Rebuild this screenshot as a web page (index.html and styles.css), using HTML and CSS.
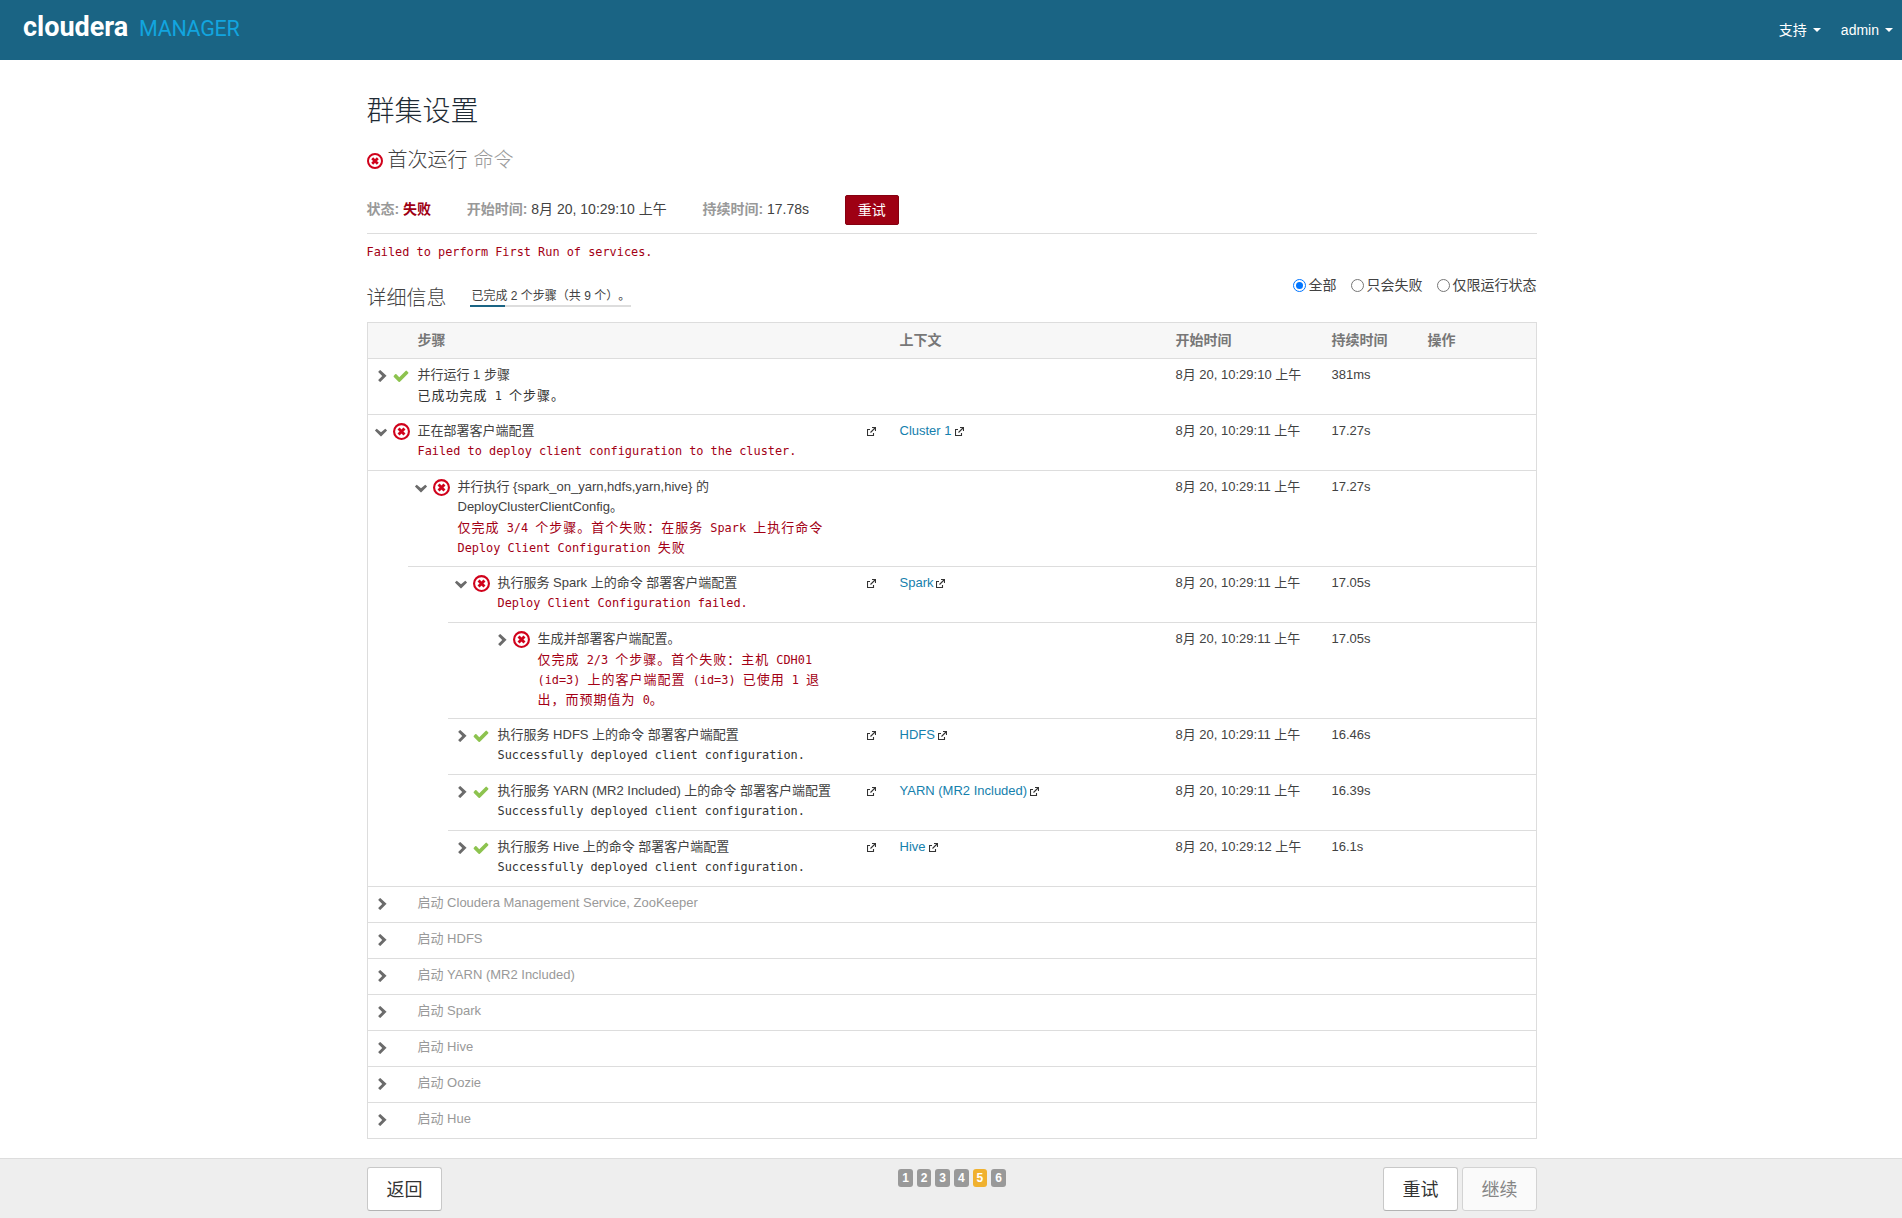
FILE: index.html
```html
<!DOCTYPE html>
<html lang="zh-CN">
<head>
  <meta charset="UTF-8">
  <title>群集设置 - Cloudera Manager</title>
  <link rel="stylesheet" href="styles.css">
</head>
<body>
  <!-- Icons -->
  <svg class="sprite">
    <symbol id="right" viewBox="346 154 1036 1484"><path d="M1363 877l-742 742q-19 19-45 19t-45-19l-166-166q-19-19-19-45t19-45l467-467-467-467q-19-19-19-45t19-45l166-166q19-19 45-19t45 19l742 678q19 19 19 45t-19 45z"/></symbol>
    <symbol id="down" viewBox="90 498 1612 1070"><path d="M1683 808l-742 741q-19 19-45 19t-45-19l-742-741q-19-19-19-45.5t19-45.5l166-165q19-19 45-19t45 19l531 431 531-431q19-19 45-19t45 19l166 165q19 19 19 45.5t-19 45.5z"/></symbol>
    <symbol id="check" viewBox="121 270 1550 1252"><path d="M1671 566q0 40-28 68l-724 724-136 136q-28 28-68 28t-68-28l-136-136-362-362q-28-28-28-68t28-68l136-136q28-28 68-28t68 28l294 295 656-657q28-28 68-28t68 28l136 136q28 28 28 68z"/></symbol>
    <symbol id="error" viewBox="0 0 16 16"><circle cx="8" cy="8" r="7" fill="none" stroke="currentColor" stroke-width="2"/><path d="M5.2 5.2l5.6 5.6M10.8 5.2l-5.6 5.6" stroke="currentColor" stroke-width="2.7"/></symbol>
    <symbol id="external" viewBox="0 0 9 9"><path d="M3 2.5H.5v6h6V6M5 .5h3.5V4M8.5.5l-5 5" fill="none" stroke="currentColor" stroke-width="1.1"/></symbol>
  </svg>

  <div class="navbar">
    <div class="logo"><b>cloudera</b><span>MANAGER</span></div>
    <div class="nav">
      <a>支持<i class="caret"></i></a>
      <a>admin<i class="caret"></i></a>
    </div>
  </div>

  <div class="container">
    <h1>群集设置</h1>
    <h2><svg class="icon-error"><use href="#error"/></svg>首次运行 <span class="muted">命令</span></h2>

    <div class="summary">
      <div><b>状态:</b> <b class="failed">失败</b></div>
      <div><b>开始时间:</b> 8月 20, 10:29:10 上午</div>
      <div><b>持续时间:</b> 17.78s</div>
      <button class="btn-danger">重试</button>
    </div>
    <p class="result msg error">Failed to perform First Run of services.</p>

    <div class="details">
      <h3>详细信息</h3>
      <div class="progress">
        <span>已完成 2 个步骤（共 9 个）。</span>
        <div class="track"><div class="bar" style="width: 22%"></div></div>
      </div>
      <div class="filters">
        <label><i class="radio checked"></i>全部</label>
        <label><i class="radio"></i>只会失败</label>
        <label><i class="radio"></i>仅限运行状态</label>
      </div>
    </div>

    <div class="table">
      <div class="row head">
        <div class="step">步骤</div>
        <div class="context">上下文</div>
        <div class="start">开始时间</div>
        <div class="duration">持续时间</div>
        <div class="ops">操作</div>
      </div>

      <div class="node">
        <div class="row">
          <div class="toggle"><svg class="right"><use href="#right"/></svg></div>
          <div class="status"><svg class="ok"><use href="#check"/></svg></div>
          <div class="step">并行运行 1 步骤<div class="msg cn">已成功完成 <span>1</span> 个步骤。</div></div>
          <div class="context"></div>
          <div class="start">8月 20, 10:29:10 上午</div>
          <div class="duration">381ms</div>
          <div class="ops"></div>
        </div>
      </div>

      <div class="node">
        <div class="row">
          <div class="toggle"><svg class="down"><use href="#down"/></svg></div>
          <div class="status"><svg class="fail"><use href="#error"/></svg></div>
          <div class="step">正在部署客户端配置<div class="msg error">Failed to deploy client configuration to the cluster.</div></div>
          <div class="link"><svg class="external"><use href="#external"/></svg></div>
          <div class="context"><a>Cluster 1</a><svg class="external"><use href="#external"/></svg></div>
          <div class="start">8月 20, 10:29:11 上午</div>
          <div class="duration">17.27s</div>
          <div class="ops"></div>
        </div>
        <div class="children">
          <div class="node">
            <div class="row">
              <div class="toggle"><svg class="down"><use href="#down"/></svg></div>
              <div class="status"><svg class="fail"><use href="#error"/></svg></div>
              <div class="step">并行执行 {spark_on_yarn,hdfs,yarn,hive} 的<br>DeployClusterClientConfig。<div class="msg cn error">仅完成 <span>3/4</span> 个步骤。首个失败：在服务 <span>Spark</span> 上执行命令<br><span>Deploy Client Configuration</span> 失败</div></div>
              <div class="context"></div>
              <div class="start">8月 20, 10:29:11 上午</div>
              <div class="duration">17.27s</div>
              <div class="ops"></div>
            </div>
            <div class="children">
              <div class="node">
                <div class="row">
                  <div class="toggle"><svg class="down"><use href="#down"/></svg></div>
                  <div class="status"><svg class="fail"><use href="#error"/></svg></div>
                  <div class="step">执行服务 Spark 上的命令 部署客户端配置<div class="msg error">Deploy Client Configuration failed.</div></div>
                  <div class="link"><svg class="external"><use href="#external"/></svg></div>
                  <div class="context"><a>Spark</a><svg class="external"><use href="#external"/></svg></div>
                  <div class="start">8月 20, 10:29:11 上午</div>
                  <div class="duration">17.05s</div>
                  <div class="ops"></div>
                </div>
                <div class="children">
                  <div class="node">
                    <div class="row">
                      <div class="toggle"><svg class="right"><use href="#right"/></svg></div>
                      <div class="status"><svg class="fail"><use href="#error"/></svg></div>
                      <div class="step">生成并部署客户端配置。<div class="msg cn error">仅完成 <span>2/3</span> 个步骤。首个失败：主机 <span>CDH01</span><br><span>(id=3)</span> 上的客户端配置 <span>(id=3)</span> 已使用 <span>1</span> 退<br>出，而预期值为 <span>0</span>。</div></div>
                      <div class="context"></div>
                      <div class="start">8月 20, 10:29:11 上午</div>
                      <div class="duration">17.05s</div>
                      <div class="ops"></div>
                    </div>
                  </div>
                </div>
              </div>
              <div class="node">
                <div class="row">
                  <div class="toggle"><svg class="right"><use href="#right"/></svg></div>
                  <div class="status"><svg class="ok"><use href="#check"/></svg></div>
                  <div class="step">执行服务 HDFS 上的命令 部署客户端配置<div class="msg">Successfully deployed client configuration.</div></div>
                  <div class="link"><svg class="external"><use href="#external"/></svg></div>
                  <div class="context"><a>HDFS</a><svg class="external"><use href="#external"/></svg></div>
                  <div class="start">8月 20, 10:29:11 上午</div>
                  <div class="duration">16.46s</div>
                  <div class="ops"></div>
                </div>
              </div>
              <div class="node">
                <div class="row">
                  <div class="toggle"><svg class="right"><use href="#right"/></svg></div>
                  <div class="status"><svg class="ok"><use href="#check"/></svg></div>
                  <div class="step">执行服务 YARN (MR2 Included) 上的命令 部署客户端配置<div class="msg">Successfully deployed client configuration.</div></div>
                  <div class="link"><svg class="external"><use href="#external"/></svg></div>
                  <div class="context"><a>YARN (MR2 Included)</a><svg class="external"><use href="#external"/></svg></div>
                  <div class="start">8月 20, 10:29:11 上午</div>
                  <div class="duration">16.39s</div>
                  <div class="ops"></div>
                </div>
              </div>
              <div class="node">
                <div class="row">
                  <div class="toggle"><svg class="right"><use href="#right"/></svg></div>
                  <div class="status"><svg class="ok"><use href="#check"/></svg></div>
                  <div class="step">执行服务 Hive 上的命令 部署客户端配置<div class="msg">Successfully deployed client configuration.</div></div>
                  <div class="link"><svg class="external"><use href="#external"/></svg></div>
                  <div class="context"><a>Hive</a><svg class="external"><use href="#external"/></svg></div>
                  <div class="start">8月 20, 10:29:12 上午</div>
                  <div class="duration">16.1s</div>
                  <div class="ops"></div>
                </div>
              </div>
            </div>
          </div>
        </div>
      </div>

      <!-- Steps not started yet -->
      <div class="node"><div class="row pending"><div class="toggle"><svg class="right"><use href="#right"/></svg></div><div class="status"></div><div class="step">启动 Cloudera Management Service, ZooKeeper</div></div></div>
      <div class="node"><div class="row pending"><div class="toggle"><svg class="right"><use href="#right"/></svg></div><div class="status"></div><div class="step">启动 HDFS</div></div></div>
      <div class="node"><div class="row pending"><div class="toggle"><svg class="right"><use href="#right"/></svg></div><div class="status"></div><div class="step">启动 YARN (MR2 Included)</div></div></div>
      <div class="node"><div class="row pending"><div class="toggle"><svg class="right"><use href="#right"/></svg></div><div class="status"></div><div class="step">启动 Spark</div></div></div>
      <div class="node"><div class="row pending"><div class="toggle"><svg class="right"><use href="#right"/></svg></div><div class="status"></div><div class="step">启动 Hive</div></div></div>
      <div class="node"><div class="row pending"><div class="toggle"><svg class="right"><use href="#right"/></svg></div><div class="status"></div><div class="step">启动 Oozie</div></div></div>
      <div class="node"><div class="row pending"><div class="toggle"><svg class="right"><use href="#right"/></svg></div><div class="status"></div><div class="step">启动 Hue</div></div></div>
    </div>
  </div>

  <div class="footer">
    <div class="footer-inner">
      <div class="side"><button class="btn">返回</button></div>
      <div class="pages">
        <span>1</span><span>2</span><span>3</span><span>4</span><span class="active">5</span><span>6</span>
      </div>
      <div class="side end">
        <button class="btn">重试</button>
        <button class="btn disabled">继续</button>
      </div>
    </div>
  </div>
</body>
</html>
```

FILE: styles.css
```css
* {
  box-sizing: border-box;
}

body {
  margin: 0;
  height: 100vh;
  display: flex;
  flex-direction: column;
  overflow: hidden;
  font-family: "Liberation Sans", Arial, "Noto Sans CJK SC", sans-serif;
  font-size: 14px;
  line-height: 20px;
  color: #424242;
  background: #fff;
}

.sprite {
  display: none;
}

svg {
  display: block;
  flex: none;
  fill: currentColor;
}

h1, h2, h3, p {
  margin: 0;
  font-weight: normal;
}

h1, h2, h3 {
  font-weight: 300;
}

button {
  font-family: inherit;
  padding: 0 0 2px;
}

/* Top bar */
.navbar {
  height: 60px;
  flex: none;
  display: flex;
  justify-content: space-between;
  padding: 0 9px 0 23px;
  background: #1a6484;
  color: #fff;
}

.logo {
  display: flex;
  align-items: baseline;
  font-family: Roboto, sans-serif;
  line-height: 55px;
}

.logo b {
  width: 116px;
  font-size: 27px;
}

.logo span {
  font-size: 21.5px;
  letter-spacing: -0.3px;
  color: #12a5df;
}

.nav {
  display: flex;
  gap: 20px;
  line-height: 60px;
}

.nav a {
  display: flex;
  align-items: center;
  gap: 6px;
}

.caret {
  border: 4px solid transparent;
  border-top-color: #fff;
  border-bottom: 0;
}

.container {
  width: 1170px;
  margin-left: 366.5px;
}

h1 {
  margin-top: 32px;
  font-size: 28px;
  line-height: 40px;
  color: #1f2b35;
}

h2 {
  display: flex;
  align-items: center;
  margin-top: 13px;
  font-size: 20px;
  line-height: 30px;
}

h2 .muted {
  margin-left: 6px;
  color: #999;
}

.icon-error {
  width: 16px;
  height: 16px;
  margin: 1px 5px 0 0;
  color: #d0021b;
}

.summary {
  display: flex;
  align-items: center;
  gap: 35.7px;
  height: 59px;
  padding-bottom: 9px;
  padding-top: 20px;
  border-bottom: 1px solid #ddd;
}

.summary div {
  margin-bottom: 2px;
}

.summary b {
  color: #999;
}

.summary b.failed {
  color: #9e0013;
}

.btn-danger {
  width: 54px;
  height: 30px;
  font-size: 14px;
  color: #fff;
  background: #9e0013;
  border: 1px solid #860010;
  border-radius: 2px;
}

.msg {
  font-family: "DejaVu Sans Mono", "Noto Sans CJK SC", monospace;
  font-size: 11.88px;
  color: #333;
}

.error {
  color: #a30015;
}

.msg.cn {
  font-size: 13px;
  font-family: "Noto Sans CJK SC", sans-serif;
  letter-spacing: 1px;
  word-spacing: 3.2px;
}

.msg.cn span {
  font-family: "DejaVu Sans Mono", monospace;
  font-size: 11.88px;
  line-height: 1;
  letter-spacing: 0;
  word-spacing: 0;
}

.result {
  margin-top: 8px;
}

.details {
  display: flex;
  margin-top: 13px;
  height: 47px;
}

h3 {
  width: 103px;
  padding-top: 8px;
  font-size: 20px;
  line-height: 30px;
}

.progress {
  width: 161px;
  padding-top: 11px;
  font-size: 12px;
  text-spacing-trim: space-all;
}

.progress span {
  display: block;
  height: 19px;
  padding-left: 2px;
}

.track {
  height: 2px;
  background: #ddd;
}

.bar {
  height: 2px;
  background: #1a6484;
}

.filters {
  display: flex;
  gap: 14px;
  margin-left: auto;
}

.filters label {
  display: flex;
  align-items: center;
  gap: 3px;
  height: 20px;
}

.radio {
  width: 13px;
  height: 13px;
  border: 1px solid #767676;
  border-radius: 50%;
}

.radio.checked {
  border-color: #0075ff;
  background: #0075ff;
  background-clip: content-box;
  padding: 2px;
}

/* Steps table */
.table {
  border: 1px solid #ddd;
  font-size: 13px;
}

.row {
  display: flex;
  padding: 6px 0 9px;
}

.row.head {
  padding: 7px 0 8px 50px;
  font-size: 14px;
  font-weight: bold;
  color: #777;
  background: #f7f7f7;
  border-bottom: 1px solid #ddd;
}

.node + .node {
  border-top: 1px solid #ddd;
}

.children {
  padding-left: 40px;
  border-top: 1px solid #ddd;
}

.toggle {
  width: 25px;
  padding: 5px 0 0 9px;
  color: #6b6b6b;
}

.status {
  width: 25px;
  padding-top: 2px;
}

.right {
  width: 9px;
  height: 12px;
}

.toggle .right {
  margin-left: 1px;
}

.down {
  width: 12px;
  height: 9px;
  margin: 2px 0 0 -2px;
}

.ok {
  width: 16px;
  height: 12px;
  margin-top: 3px;
  color: #8dc34f;
}

.fail {
  width: 17px;
  height: 17px;
  color: #d0021b;
}

.step {
  flex: 1;
  white-space: nowrap;
}

.link {
  width: 33px;
  padding-top: 6px;
}

.context {
  width: 276px;
  display: flex;
}

.context .external {
  margin: 6px 0 0 3px;
}

.context a {
  color: #1580ad;
}

.external {
  width: 9px;
  height: 9px;
  color: #333;
}

.start {
  width: 156px;
}

.duration {
  width: 96px;
}

.ops {
  width: 108px;
}

.pending {
  color: #999;
}

/* Wizard footer */
.footer {
  height: 60px;
  margin-top: auto;
  flex: none;
  background: #eee;
  border-top: 1px solid #ddd;
}

.footer-inner {
  width: 1170px;
  margin-left: 367px;
  padding-top: 8px;
  display: flex;
}

.side {
  flex: 1;
  display: flex;
  gap: 4px;
}

.side.end {
  justify-content: flex-end;
}

.btn {
  width: 75px;
  height: 44px;
  font-size: 18px;
  color: #333;
  background: #fff;
  border: 1px solid #c8c8c8;
  border-bottom-color: #b3b3b3;
  border-radius: 3px;
}

.btn.disabled {
  color: #858585;
  background: #fafafa;
  border-color: #d3d3d3;
}

.pages {
  display: flex;
  gap: 4px;
  padding-top: 2px;
}

.pages span {
  width: 14.6px;
  height: 18px;
  border-radius: 3px;
  background: #999;
  color: #fff;
  font-size: 12px;
  font-weight: bold;
  line-height: 18px;
  text-align: center;
}

.pages .active {
  background: #f0b12f;
}
```
